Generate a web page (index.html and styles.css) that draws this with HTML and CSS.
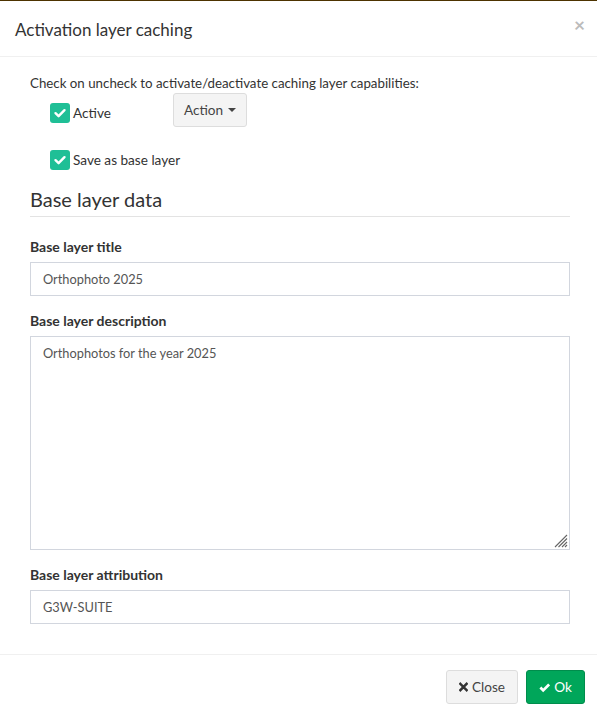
FILE: index.html
```html
<!DOCTYPE html>
<html>
<head>
<meta charset="utf-8">
<link rel="stylesheet" href="styles.css">
</head>
<body>
<div class="modal">
  <div class="modal-header">
    <h4 class="modal-title">Activation layer caching</h4>
    <span class="close">×</span>
  </div>
  <div class="modal-body">
    <p class="intro">Check on uncheck to activate/deactivate caching layer capabilities:</p>
    <div class="row-active">
      <label class="check"><span class="box"><svg viewBox="0 0 20 20" width="20" height="20"><path d="M5.5 10.2 L8.6 13.2 L14.5 7.2" fill="none" stroke="#fff" stroke-width="2.4" stroke-linecap="round" stroke-linejoin="round"/></svg></span>Active</label>
      <button class="btn btn-action">Action <span class="caret"></span></button>
    </div>
    <div class="row-save">
      <label class="check"><span class="box"><svg viewBox="0 0 20 20" width="20" height="20"><path d="M5.5 10.2 L8.6 13.2 L14.5 7.2" fill="none" stroke="#fff" stroke-width="2.4" stroke-linecap="round" stroke-linejoin="round"/></svg></span>Save as base layer</label>
    </div>
    <h3 class="section">Base layer data</h3>
    <div class="group">
      <label class="lbl">Base layer title</label>
      <div class="input">Orthophoto 2025</div>
    </div>
    <div class="group">
      <label class="lbl">Base layer description</label>
      <div class="input textarea">Orthophotos for the year 2025
        <svg class="grip" width="14" height="14" viewBox="0 0 14 14"><path d="M13 1 L1 13 M13 4.5 L4.5 13 M13 8 L8 13 M13 11 L11 13" stroke="#666" stroke-width="1.1" fill="none"/></svg>
      </div>
    </div>
    <div class="group last">
      <label class="lbl">Base layer attribution</label>
      <div class="input">G3W-SUITE</div>
    </div>
  </div>
  <div class="modal-footer">
    <button class="btn btn-close"><svg width="10" height="10" viewBox="0 0 10 10"><path d="M1.5 1.5 L8.5 8.5 M8.5 1.5 L1.5 8.5" stroke="#333" stroke-width="2.8" stroke-linecap="square"/></svg>Close</button>
    <button class="btn btn-ok"><svg width="13" height="11" viewBox="0 0 13 11"><path d="M1.6 5.6 L4.8 8.8 L11.6 2" fill="none" stroke="#fff" stroke-width="3.2"/></svg>Ok</button>
  </div>
</div>
</body>
</html>
```
FILE: styles.css
```css
* { box-sizing: border-box; }
html, body { margin: 0; padding: 0; background: #fff; }
body {
  font-family: Lato, "Open Sans", sans-serif;
  font-size: 13.3px;
  color: #333;
}
.modal {
  width: 597px;
  height: 713px;
  border-top: 1px solid #4d3300;
  display: flex;
  flex-direction: column;
}
.modal-header {
  height: 56px;
  border-bottom: 1px solid #f0f0f0;
  padding: 0 15px;
  display: flex;
  align-items: center;
  justify-content: space-between;
}
.modal-title {
  margin: 0;
  font-size: 17px;
  font-weight: 400;
  color: #333;
  padding-top: 2px;
}
.close {
  color: #bbb;
  font-size: 19px;
  font-weight: 700;
  margin-top: -8px;
  margin-right: -3px;
}
.modal-body {
  padding: 17px 27px 0 30px;
  flex: 1;
}
.intro { margin: 0; line-height: 18px; }
.row-active {
  display: flex;
  align-items: flex-start;
  padding-left: 20px;
}
.check {
  display: flex;
  align-items: center;
  gap: 3px;
  line-height: 20px;
  font-size: 13.6px;
}
.row-active .check { margin-top: 11px; width: 123px; }
.box {
  width: 20px;
  height: 20px;
  background: #1fbf96;
  border-radius: 3px;
  display: block;
}
.box svg { display: block; }
.btn {
  font-family: inherit;
  font-size: 14px;
  border-radius: 3px;
  height: 34px;
  display: inline-flex;
  align-items: center;
  justify-content: center;
  gap: 4px;
  padding: 0 12px;
  cursor: pointer;
}
.btn-action {
  background: #f4f4f4;
  border: 1px solid #ddd;
  color: #444;
  height: 34px;
  width: 74px;
  font-size: 13.6px;
  margin-top: 1px;
}
.caret {
  width: 0; height: 0;
  border-left: 4px solid transparent;
  border-right: 4px solid transparent;
  border-top: 4px solid #444;
  margin-left: 1px;
}
.row-save { padding-left: 20px; margin-top: 23px; }
.section {
  margin: 16px 0 0 0;
  font-size: 20px;
  font-weight: 400;
  line-height: 26px;
  padding-bottom: 4px;
  border-bottom: 1px solid #e3e3e3;
}
.group { margin-top: 21px; }
.group + .group { margin-top: 16px; }
.lbl {
  display: block;
  font-weight: 700;
  font-size: 14px;
  line-height: 18px;
  margin-bottom: 6px;
}
.input {
  height: 34px;
  border: 1px solid #d2d6de;
  padding: 0 12px;
  line-height: 32px;
  font-size: 12.8px;
  color: #555;
}
.textarea {
  height: 214px;
  line-height: 20px;
  padding-top: 6px;
  position: relative;
}
.grip { position: absolute; right: 1px; bottom: 1px; }
.modal-footer {
  height: 59px;
  border-top: 1px solid #f0f0f0;
  display: flex;
  justify-content: flex-end;
  gap: 8px;
  padding: 15px 12px 0 0;
}
.btn-close {
  background: #f4f4f4;
  border: 1px solid #ddd;
  color: #444;
  width: 72px;
  font-size: 13.6px;
}
.btn-ok {
  background: #00a65a;
  border: 1px solid #008d4c;
  color: #fff;
  width: 59px;
  font-size: 13.6px;
}
```
